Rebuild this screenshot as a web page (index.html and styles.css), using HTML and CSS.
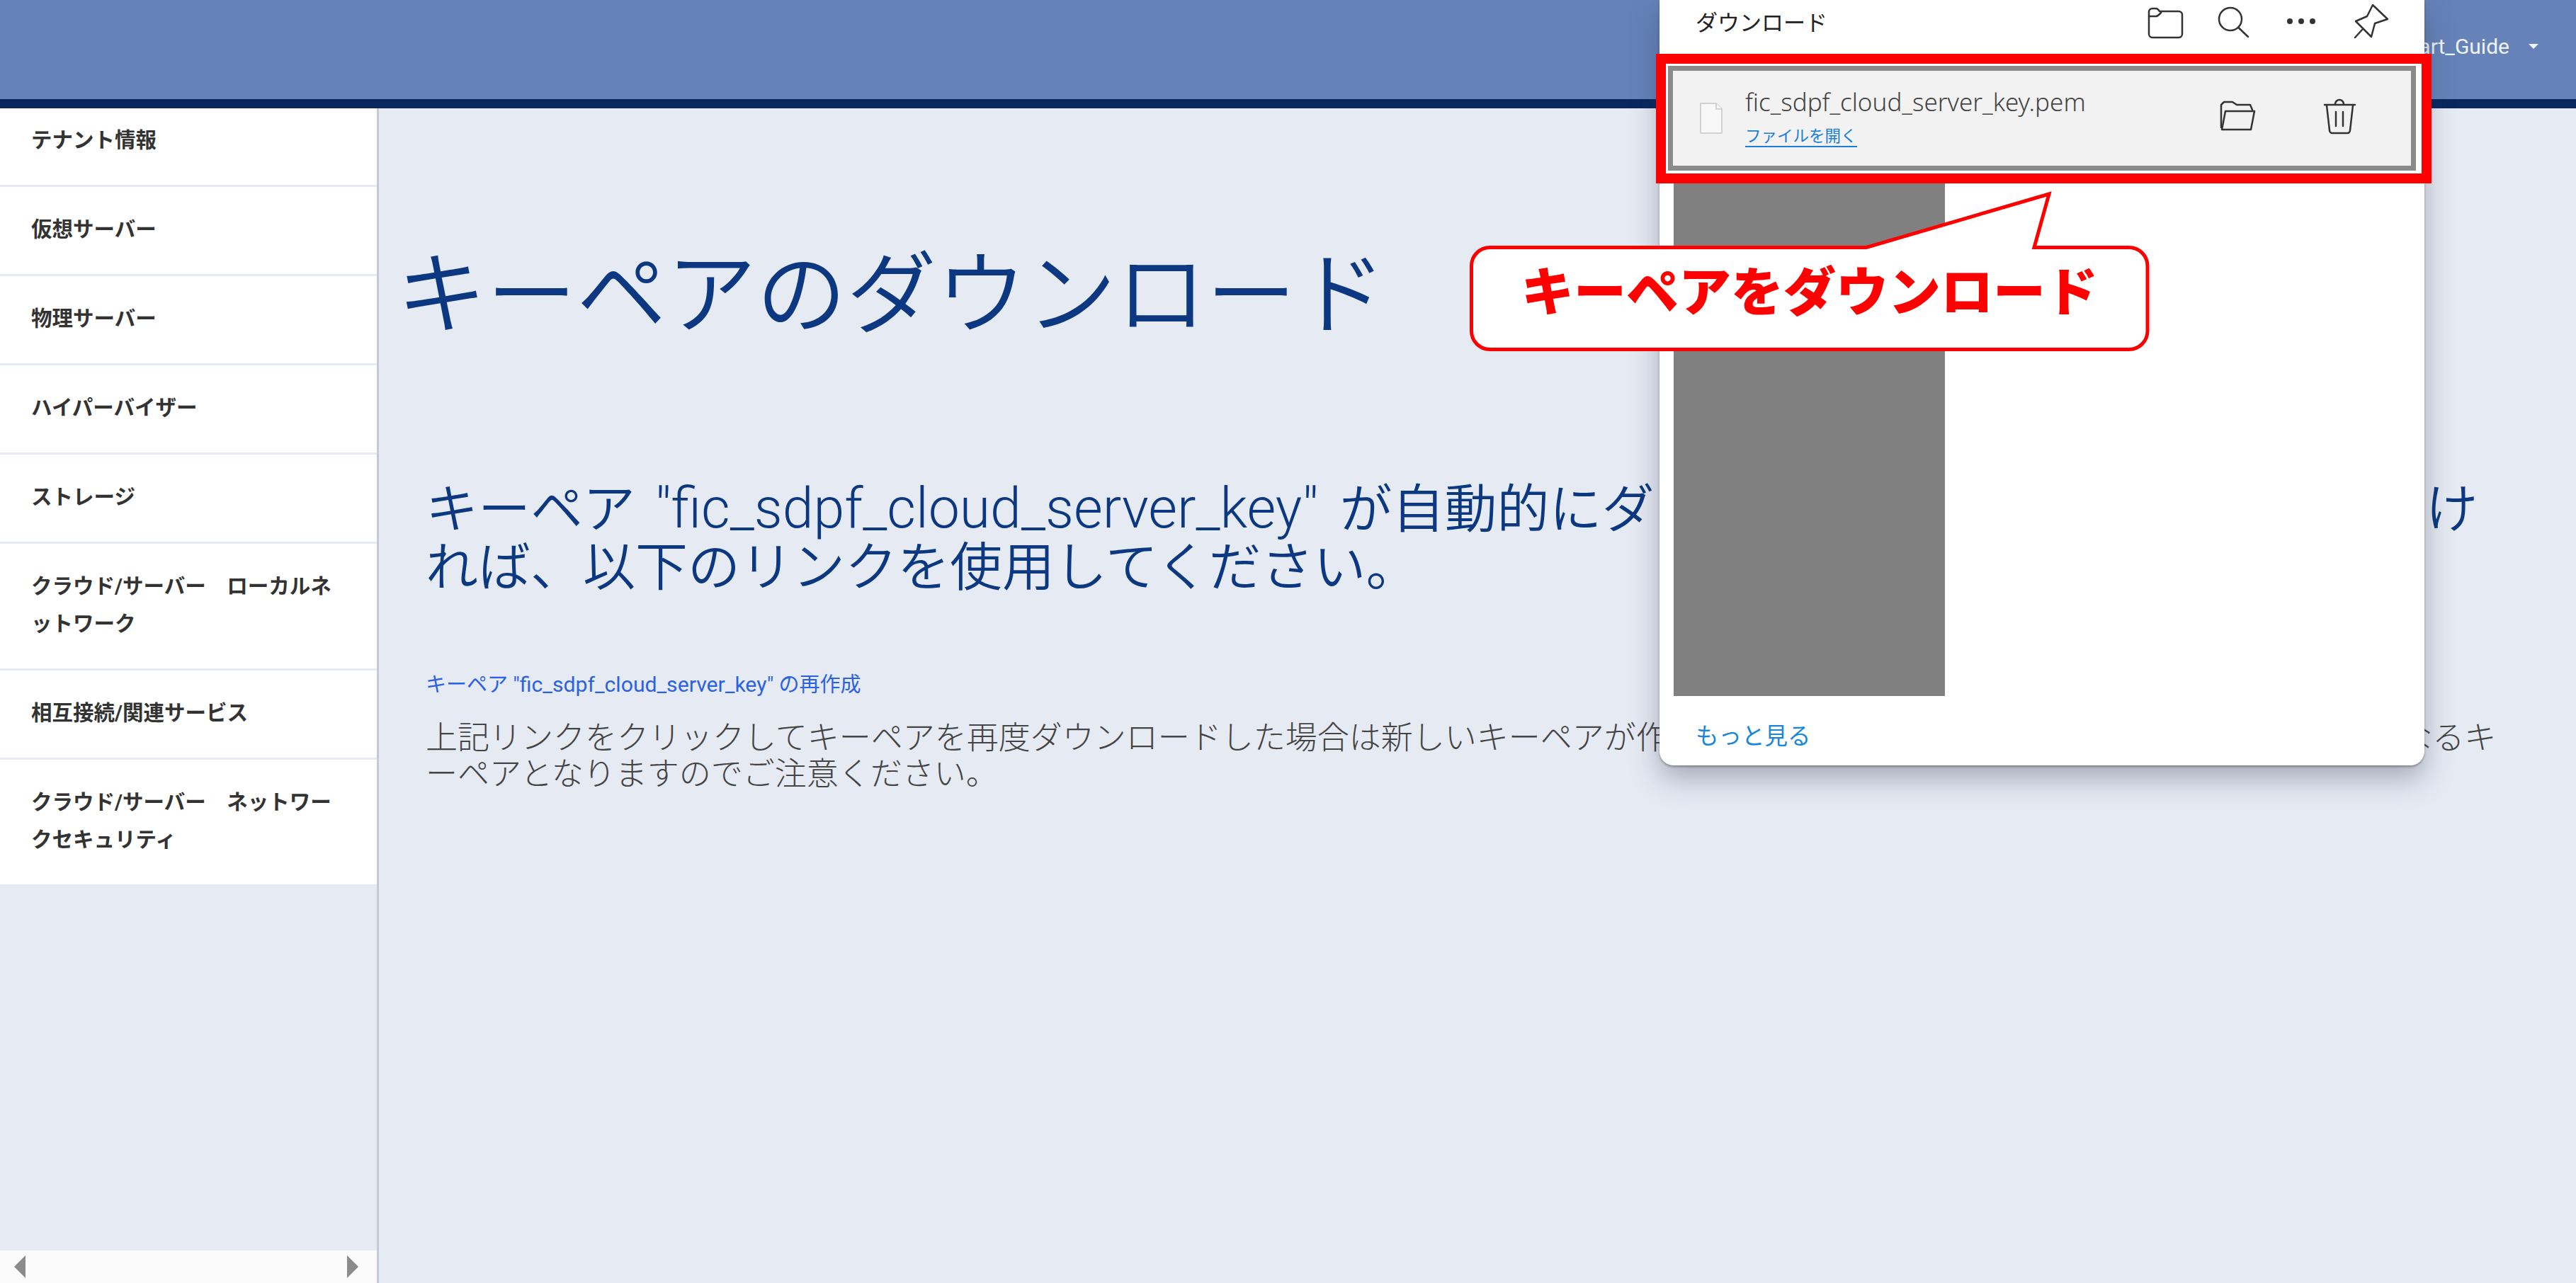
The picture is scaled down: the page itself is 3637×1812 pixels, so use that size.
FILE: index.html
```html
<html>
    <head>
        <meta charset="UTF-8">
        <title>キーペアのダウンロード</title>
        <link rel="stylesheet" href="styles.css">
    </head>

    <body>
        <header class="top-bar">
            <span class="tenant-name">Start_Guide</span>
            <span class="tenant-caret"></span>
        </header>

        <div class="layout">
            <!-- Side menu -->
            <aside class="sidebar">
                <nav class="menu">
                    <a class="menu-item first">テナント情報</a>
                    <a class="menu-item">仮想サーバー</a>
                    <a class="menu-item">物理サーバー</a>
                    <a class="menu-item">ハイパーバイザー</a>
                    <a class="menu-item">ストレージ</a>
                    <a class="menu-item">クラウド/サーバー　ローカルネットワーク</a>
                    <a class="menu-item">相互接続/関連サービス</a>
                    <a class="menu-item">クラウド/サーバー　ネットワークセキュリティ</a>
                </nav>
                <div class="side-scroll">
                    <span class="arrow-left"></span>
                    <span class="arrow-right"></span>
                </div>
            </aside>

            <!-- Main content -->
            <main class="content">
                <h1 class="page-title">キーペアのダウンロード</h1>
                <p class="lead">キーペア <span class="latin">"fic_sdpf_cloud_server_key"</span>が自動的に<span class="tight">ダウンロードされます。開始されな</span>ければ、以下のリンクを使用してください。</p>
                <a class="regen-link">キーペア <span class="latin">"fic_sdpf_cloud_server_key"</span> の再作成</a>
                <p class="note">上記リンクをクリックしてキーペアを再度ダウンロードした場合は新しいキーペアが作成され、以前にダウンロードされたキーペアとは異なるキーペアとなりますのでご注意ください。</p>
            </main>
        </div>

        <!-- Browser download panel -->
        <div class="download-panel">
            <div class="panel-head">
                <span class="panel-title">ダウンロード</span>
                <div class="panel-icons">
                    <svg class="icon" viewBox="0 0 60 60"><path d="M7 15a5 5 0 0 1 5-5h5c2 0 3 1 5 4h27a5 5 0 0 1 5 5v27a5 5 0 0 1-5 5H12a5 5 0 0 1-5-5z"/><path d="M7 21h10c2 0 3-1 5-3l2-2"/></svg>
                    <svg class="icon" viewBox="0 0 60 60"><circle cx="25" cy="25" r="16"/><path d="M36.500 37L50 50"/></svg>
                    <svg class="icon" viewBox="0 0 60 60"><circle class="dot" cx="12" cy="28" r="4"/><circle class="dot" cx="28" cy="28" r="4"/><circle class="dot" cx="44" cy="28" r="4"/></svg>
                    <svg class="icon" viewBox="0 0 60 60"><path d="M32 5L53 25L35 31L30 50L8 28L24 21z"/><path d="M17 40L7 51"/></svg>
                </div>
            </div>
            <div class="download-item">
                <svg class="file-icon" viewBox="0 0 32 44"><path d="M1 1H23L31 9V43H1z"/><path d="M23 1V9H31"/></svg>
                <div class="file-info">
                    <div class="file-name">fic_sdpf_cloud_server_key.pem</div>
                    <a class="file-open">ファイルを開く</a>
                </div>
                <div class="item-icons">
                    <svg class="icon" viewBox="0 0 60 60"><path d="M7 46V14l4-4H23l6 4H48l3 7"/><path d="M13 23H54L49 49H8z"/></svg>
                    <svg class="icon" viewBox="0 0 60 60"><path d="M9 14H52"/><path d="M24 13a6 6 0 0 1 12 0"/><path d="M12 15L16 50a4 4 0 0 0 4 4H41a4 4 0 0 0 4-4L49 15"/><path d="M25 24V44"/><path d="M35 24V44"/></svg>
                </div>
            </div>
            <div class="thumb"></div>
            <a class="more-link">もっと見る</a>
        </div>

        <!-- Annotations drawn over the screenshot -->
        <div class="mark-box"></div>
        <div class="callout">
            <svg class="callout-shape" viewBox="0 0 990 250"><path d="M43.500 89.500H575L833 14L812 89.500H946a26 26 0 0 1 26 26V207.500a26 26 0 0 1-26 26H43.500a26 26 0 0 1-26-26V115.500a26 26 0 0 1 26-26z"/></svg>
            <div class="callout-text">キーペアをダウンロード</div>
        </div>
    </body>
</html>
```

FILE: styles.css
```css
*{
    box-sizing: border-box;
}

body, html{
    margin: 0;
    height: 100%;
    overflow: hidden;
}

body{
    position: relative;
    display: flex;
    flex-direction: column;
    background-color: #e6eaf3;
    font-family: Roboto, "Noto Sans CJK JP", sans-serif;
}

/* Top bar */
.top-bar{
    height: 153px;
    flex: none;
    display: flex;
    justify-content: flex-end;
    align-items: center;
    gap: 27px;
    padding: 0 53px 10px 0;
    background-color: #6583b9;
    border-bottom: 13px solid #08275f;
}

.tenant-name{
    font-size: 30px;
    color: #f0f3fa;
}

.tenant-caret{
    width: 0;
    height: 0;
    border-left: 7px solid transparent;
    border-right: 7px solid transparent;
    border-top: 7px solid #f0f3fa;
}

.layout{
    flex: 1;
    display: flex;
    min-height: 0;
}

/* Side menu */
.sidebar{
    width: 535px;
    flex: none;
    display: flex;
    flex-direction: column;
    justify-content: space-between;
    border-right: 3px solid #c6cad4;
}

.menu{
    display: flex;
    flex-direction: column;
}

.menu-item{
    display: block;
    padding: 34px 44px 36px;
    font-size: 29.500px;
    font-weight: 700;
    line-height: 53px;
    color: #333333;
    background-color: #ffffff;
    border-bottom: 3px solid #e6eaf3;
}

.menu-item.first{
    padding-top: 19px;
}

.side-scroll{
    height: 46px;
    display: flex;
    justify-content: space-between;
    align-items: center;
    padding: 0 26px 0 20px;
    background-color: #fbfbfb;
}

.arrow-left{
    border-top: 16px solid transparent;
    border-bottom: 16px solid transparent;
    border-right: 16px solid #8b8b8b;
}

.arrow-right{
    border-top: 16px solid transparent;
    border-bottom: 16px solid transparent;
    border-left: 16px solid #8b8b8b;
}

/* Main content */
.content{
    flex: 1;
    display: flex;
    flex-direction: column;
    align-items: flex-start;
    padding: 190px 97px 0 66px;
}

.page-title{
    margin: 0 0 0 -41px;
    font-size: 127px;
    font-weight: 350;
    line-height: 150px;
    color: #0b3880;
}

.lead{
    margin: 184px 0 0;
    font-size: 74px;
    font-weight: 350;
    line-height: 82px;
    color: #0b3880;
}

/* latin runs come out a bit larger than the kana */
.latin{
    font-size: 1.065em;
}

.lead .latin{
    margin: 0 30px 0 10px;
}

/* hidden behind the panel, only there so the line ends on the right glyph */
.tight{
    letter-spacing: -0.850px;
}

.regen-link{
    margin-top: 104px;
    font-size: 29px;
    font-weight: 400;
    line-height: 40px;
    color: #2b62e3;
}

.regen-link .latin{
    font-size: 1.040em;
}

.note{
    margin: 30px 0 0;
    font-size: 45px;
    font-weight: 300;
    line-height: 51px;
    color: #444444;
}

/* Download panel */
.download-panel{
    position: absolute;
    top: 0;
    left: 2343px;
    width: 1080px;
    height: 1081px;
    display: flex;
    flex-direction: column;
    background-color: #ffffff;
    border-radius: 0 0 20px 20px;
    box-shadow: 0 2px 3px rgba(0, 0, 0, 0.3), 0 18px 40px rgba(40, 50, 70, 0.35);
    font-family: "Noto Sans", "Noto Sans CJK JP", sans-serif;
}

.panel-head{
    height: 93px;
    flex: none;
    display: flex;
    justify-content: space-between;
    align-items: flex-start;
    padding: 2px 45px 0 51px;
}

.panel-title{
    margin-top: -2px;
    font-family: "Noto Sans CJK JP", sans-serif;
    font-size: 31px;
    line-height: 60px;
    color: #222222;
}

.panel-icons{
    display: flex;
    gap: 37px;
}

.icon{
    width: 60px;
    height: 60px;
    flex: none;
    fill: none;
    stroke: #333333;
    stroke-width: 2.5;
    stroke-linecap: round;
    stroke-linejoin: round;
}

.icon .dot{
    fill: #333333;
    stroke: none;
}

.download-item{
    height: 148px;
    flex: none;
    display: flex;
    align-items: center;
    margin: 0 12px;
    padding: 0 71px 0 38px;
    background-color: #f2f2f2;
    border: 7px solid #8a8a8a;
}

.file-icon{
    width: 32px;
    height: 44px;
    flex: none;
    fill: #f8f8f8;
    stroke: #d2d2d2;
    stroke-width: 2;
}

.file-info{
    margin-left: 32px;
    display: flex;
    flex-direction: column;
    align-items: flex-start;
    gap: 12px;
}

.file-name{
    font-size: 35px;
    font-weight: 300;
    line-height: 36px;
    color: #444444;
}

.file-open{
    font-family: "Noto Sans CJK JP", sans-serif;
    font-size: 22.500px;
    line-height: 32px;
    color: #1a7fd4;
    border-bottom: 2px solid #1a7fd4;
}

.item-icons{
    display: flex;
    gap: 84px;
    margin-left: auto;
    margin-bottom: 6px;
}

.thumb{
    width: 383px;
    height: 724px;
    flex: none;
    margin: 18px 0 0 20px;
    background-color: #808080;
}

.more-link{
    margin: 34px 0 0 51px;
    font-family: "Noto Sans CJK JP", sans-serif;
    font-size: 32.500px;
    line-height: 40px;
    color: #1a86d9;
}

/* Annotations */
.mark-box{
    position: absolute;
    top: 76px;
    left: 2338px;
    width: 1095px;
    height: 183px;
    border: 14px solid #ff0000;
}

.callout{
    position: absolute;
    top: 260px;
    left: 2060px;
    width: 990px;
    height: 250px;
}

.callout-shape{
    display: block;
    width: 990px;
    height: 250px;
    fill: #ffffff;
    stroke: #ff0000;
    stroke-width: 5;
}

.callout-text{
    position: absolute;
    top: 102px;
    left: 0;
    width: 990px;
    text-align: center;
    font-family: "Noto Sans CJK JP", sans-serif;
    font-size: 74px;
    font-weight: 900;
    line-height: 90px;
    color: #ff0000;
}
```
